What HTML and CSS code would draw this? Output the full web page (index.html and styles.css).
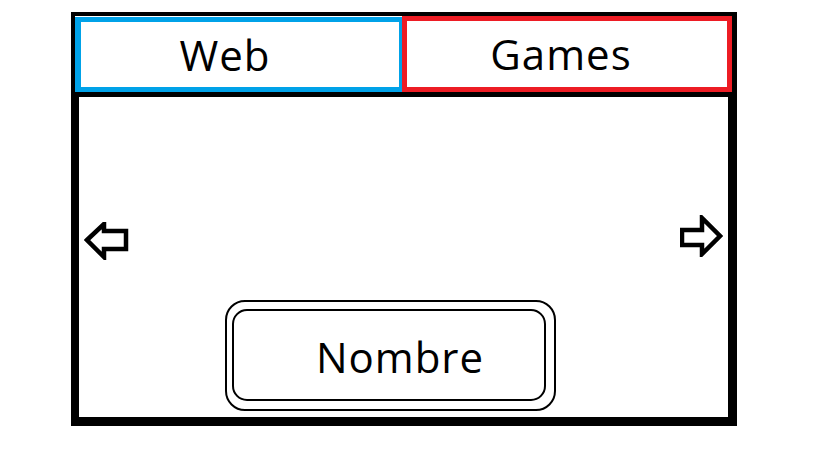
FILE: index.html
```html
<!DOCTYPE html>
<html lang="es">
<head>
  <meta charset="UTF-8">
  <meta name="viewport" content="width=device-width, initial-scale=1.0">
  <title>Web / Games</title>
  <link rel="stylesheet" href="styles.css">
</head>
<body>
  <div class="frame">
    <div class="tabs">
      <div class="tab tab-web">Web</div>
      <div class="tab tab-games">Games</div>
    </div>
    <div class="divider"></div>
    <div class="content">
      <div class="arrows">
        <svg class="arrow arrow-left" width="45" height="38" viewBox="0 0 45 38">
          <polygon points="3,18 20,2 20,9 42,9 42,27 20,27 20,35" fill="none" stroke="#000" stroke-width="4.5" stroke-linejoin="miter"/>
        </svg>
        <svg class="arrow arrow-right" width="43" height="42" viewBox="0 0 43 42">
          <polygon points="2,15 22,15 22,3 40,21 22,39 22,30 2,30" fill="none" stroke="#000" stroke-width="4.5" stroke-linejoin="miter"/>
        </svg>
      </div>
      <div class="name-box">
        <div class="name-inner">Nombre</div>
      </div>
    </div>
  </div>
</body>
</html>
```

FILE: styles.css
```css
body {
  margin: 0;
  background: #fff;
  font-family: "Open Sans", "DejaVu Sans", sans-serif;
  color: #000;
}
.frame {
  margin: 12px 0 0 71px;
  width: 657px;
  border-style: solid;
  border-color: #000;
  border-width: 4px 5px 9px 4px;
}
.tabs {
  display: flex;
  align-items: flex-end;
  height: 76px;
}
.tab {
  box-sizing: border-box;
  display: flex;
  align-items: center;
  justify-content: center;
  font-size: 42px;
  letter-spacing: 1px;
  line-height: 1;
}
.tab-web {
  width: 327px;
  height: 75px;
  border-style: solid;
  border-color: #00a2e8;
  border-width: 5px 3px 5px 6px;
  padding-right: 30px;
}
.tab-games {
  width: 330px;
  height: 76px;
  border: 5px solid #ed1c24;
  padding-right: 12px;
}
.divider {
  height: 5px;
  background: #000;
}
.content {
  height: 320px;
  border-left: 4px solid #000;
  border-right: 4px solid #000;
}
.arrows {
  display: flex;
  justify-content: space-between;
  align-items: flex-start;
  padding: 118px 5px 0 5px;
  height: 42px;
}
.arrow {
  display: block;
}
.arrow-left {
  margin-top: 7px;
}
.name-box {
  box-sizing: border-box;
  width: 331px;
  height: 111px;
  margin: 43px 0 0 146px;
  border: 2px solid #000;
  border-radius: 20px;
  padding: 7px 8px 8px 5px;
}
.name-inner {
  box-sizing: border-box;
  height: 100%;
  border: 2px solid #000;
  border-radius: 15px;
  display: flex;
  align-items: center;
  justify-content: center;
  padding: 4px 0 0 22px;
  font-size: 42px;
  letter-spacing: 1px;
  line-height: 1;
}
```
